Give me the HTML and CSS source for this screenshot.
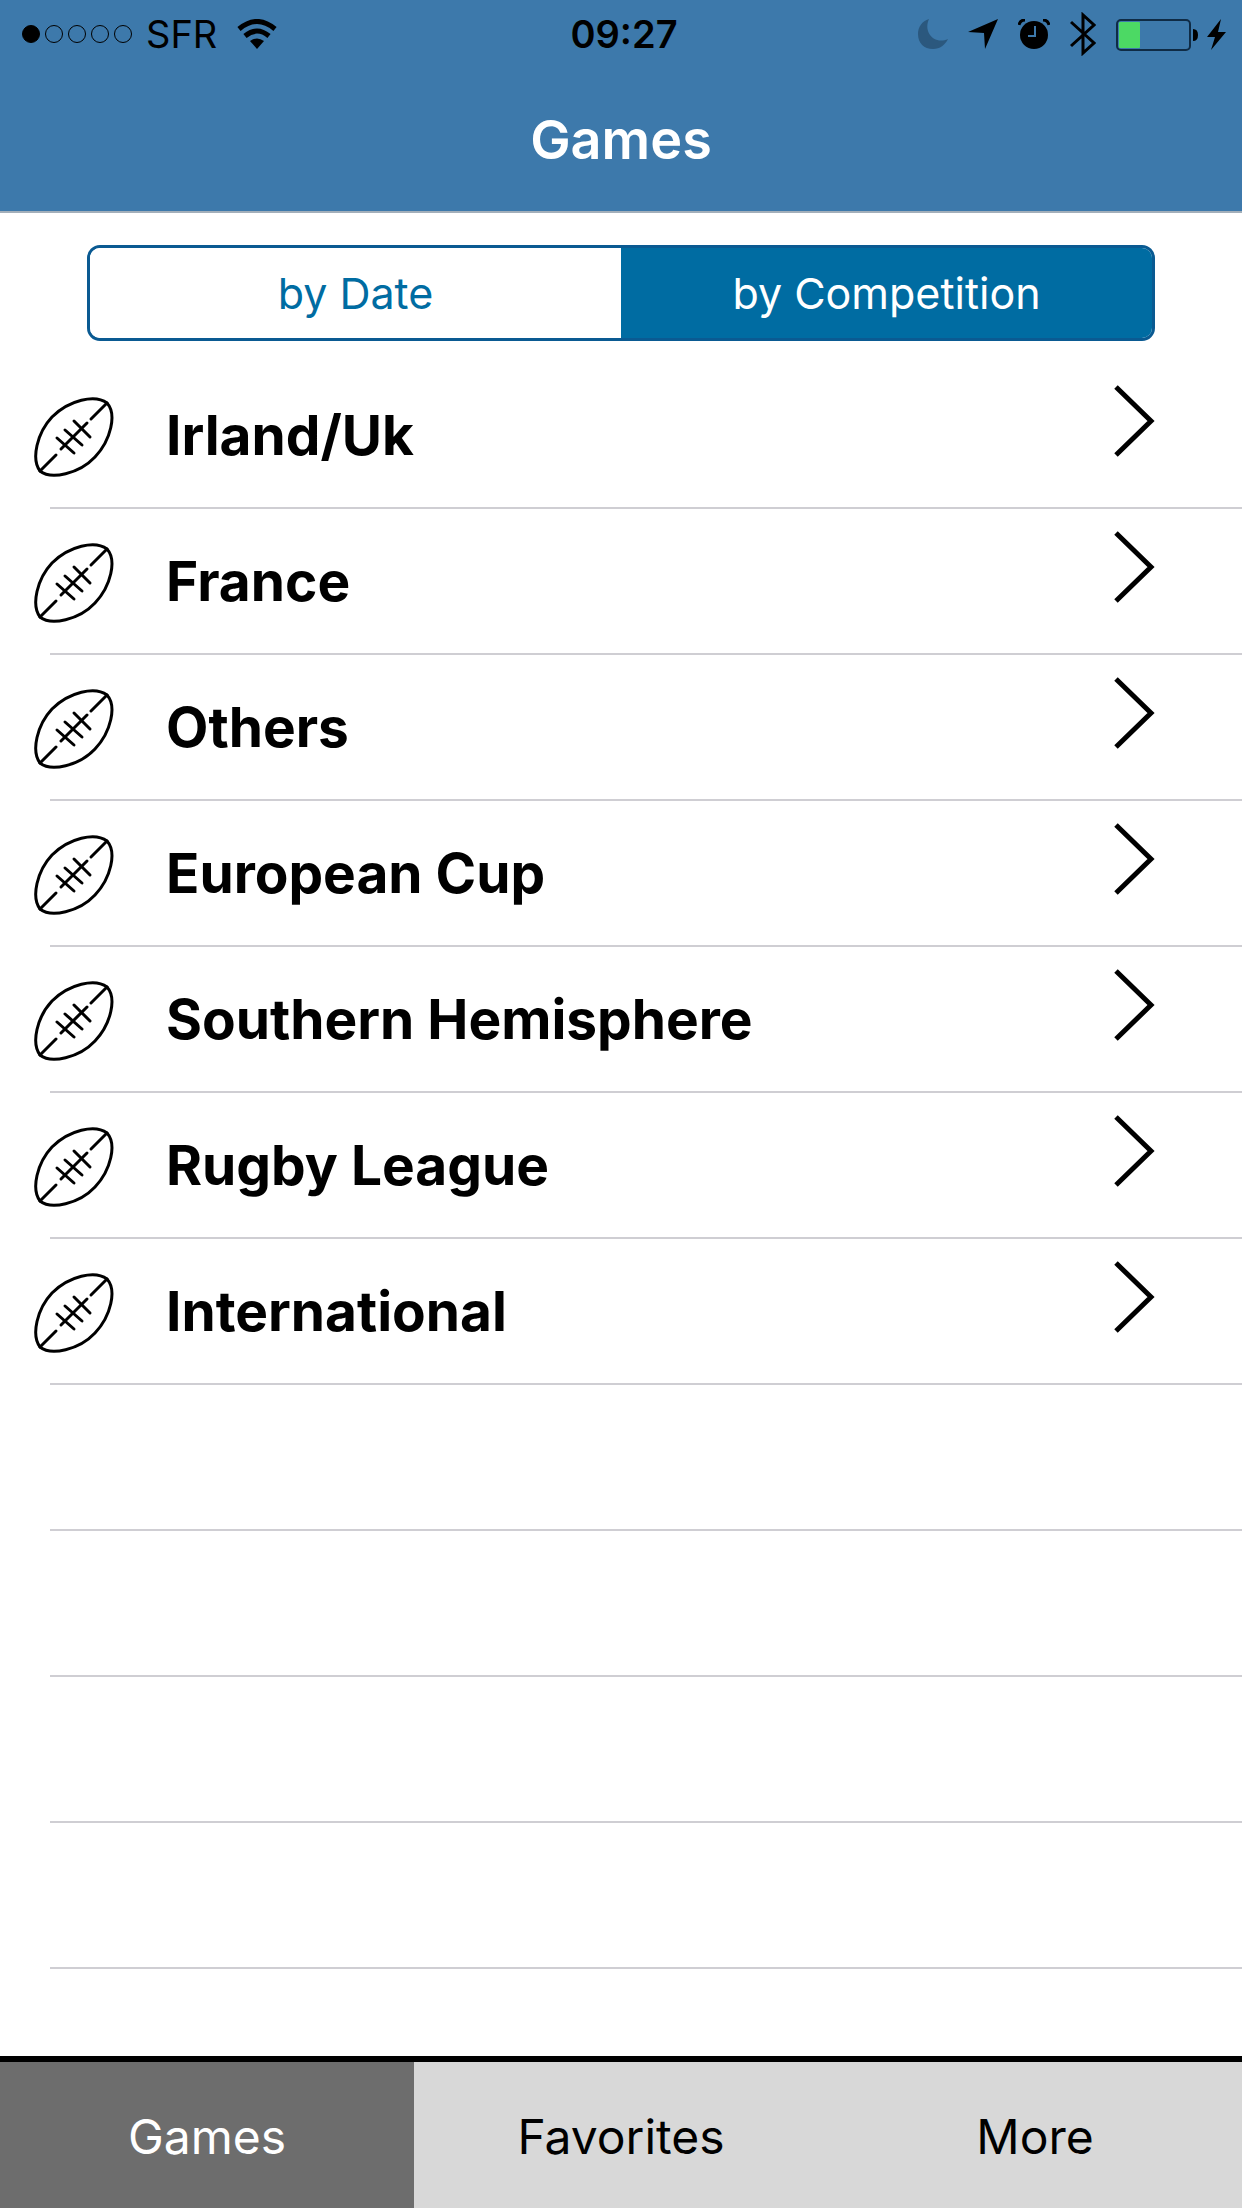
FILE: index.html
```html
<!DOCTYPE html>
<html lang="en">
<head>
    <meta charset="UTF-8">
    <meta name="viewport" content="width=device-width, initial-scale=1.0">
    <title>Games</title>
    <link rel="stylesheet" href="styles.css">
</head>
<body>

<!-- shared icons -->
<svg class="sprite" aria-hidden="true">
    <symbol id="ball" viewBox="0 0 80 80">
        <g fill="none" stroke="#000" stroke-width="3" stroke-linecap="round">
            <path d="M6 74C-3 62 3 36 18 20C35 3 61-3 73 6C83 17 77 43 61 60C45 77 17 83 6 74Z"/>
            <path d="M6 74L22 58M27 52L53 26M57 22L73 6"/>
            <path d="M23 41L40 56M31 33L48 48M40 24L56 40"/>
        </g>
    </symbol>
    <symbol id="chevron" viewBox="0 0 42 74">
        <path d="M3 3L38 37L3 71" fill="none" stroke="#000" stroke-width="5"/>
    </symbol>
</svg>

<header>
    <div class="status-bar">
        <div class="status-left">
            <span class="signal">
                <i class="dot full"></i>
                <i class="dot"></i>
                <i class="dot"></i>
                <i class="dot"></i>
                <i class="dot"></i>
            </span>
            <span class="carrier">SFR</span>
            <svg width="40" height="30" viewBox="0 0 40 30">
                <path d="M2 10Q20-5 38 10" fill="none" stroke="#000" stroke-width="5"/>
                <path d="M8 17Q20 7 32 17" fill="none" stroke="#000" stroke-width="5"/>
                <path d="M13 22Q20 17 27 22L20 30Z"/>
            </svg>
        </div>
        <time class="clock">09:27</time>
        <div class="status-right">
            <svg width="30" height="30" viewBox="0 0 30 30">
                <path d="M11 0C5 13 16 26 30 20C27 26 22 30 15 30C6 30 0 24 0 15C0 8 4 2 11 0Z" fill="#2b587e"/>
            </svg>
            <svg width="30" height="30" viewBox="0 0 30 30">
                <path d="M30 0L17 30L16 14L0 13Z"/>
            </svg>
            <svg width="32" height="30" viewBox="0 0 32 30">
                <circle cx="16" cy="16" r="14"/>
                <path d="M17 7V17H10" fill="none" stroke="#3d79ab" stroke-width="2"/>
                <path d="M1 6Q2 1 7 1M25 1Q30 1 31 6" fill="none" stroke="#000" stroke-width="3"/>
            </svg>
            <svg width="26" height="44" viewBox="0 0 26 44">
                <path d="M1 10L24 31L13 41V3L24 13L1 34" fill="none" stroke="#000" stroke-width="3"/>
            </svg>
            <svg width="110" height="33" viewBox="0 0 110 33">
                <rect x="1" y="2" width="73" height="30" rx="4" fill="none" stroke="#0f2b45" stroke-width="2"/>
                <rect x="3" y="4" width="21" height="26" rx="1" fill="#4cd964"/>
                <path d="M77 11Q82 11 82 17Q82 23 77 23Z"/>
                <path d="M105 1L91 19H99L95 32L110 14H102Z"/>
            </svg>
        </div>
    </div>
    <h1>Games</h1>
</header>

<main>
    <div class="segmented">
        <button type="button">by Date</button>
        <button type="button" class="selected">by Competition</button>
    </div>

    <ul class="list">
        <li><a href="#"><svg class="ball"><use href="#ball"/></svg><span>Irland/Uk</span><svg class="chevron"><use href="#chevron"/></svg></a></li>
        <li><a href="#"><svg class="ball"><use href="#ball"/></svg><span>France</span><svg class="chevron"><use href="#chevron"/></svg></a></li>
        <li><a href="#"><svg class="ball"><use href="#ball"/></svg><span>Others</span><svg class="chevron"><use href="#chevron"/></svg></a></li>
        <li><a href="#"><svg class="ball"><use href="#ball"/></svg><span>European Cup</span><svg class="chevron"><use href="#chevron"/></svg></a></li>
        <li><a href="#"><svg class="ball"><use href="#ball"/></svg><span>Southern Hemisphere</span><svg class="chevron"><use href="#chevron"/></svg></a></li>
        <li><a href="#"><svg class="ball"><use href="#ball"/></svg><span>Rugby League</span><svg class="chevron"><use href="#chevron"/></svg></a></li>
        <li><a href="#"><svg class="ball"><use href="#ball"/></svg><span>International</span><svg class="chevron"><use href="#chevron"/></svg></a></li>
        <li></li>
        <li></li>
        <li></li>
        <li></li>
    </ul>
</main>

<nav class="tabs">
    <a href="#" class="active">Games</a>
    <a href="#">Favorites</a>
    <a href="#">More</a>
</nav>

</body>
</html>
```
FILE: styles.css
```css
* {
    box-sizing: border-box;
}

body {
    font-family: Inter, "Liberation Sans", sans-serif;
    margin: 0;
    min-height: 100vh;
    display: flex;
    flex-direction: column;
    background-color: #fff;
    color: #000;
}

a {
    color: inherit;
    text-decoration: none;
}

.sprite {
    display: none;
}

header {
    background-color: #3d79ab;
    border-bottom: 2px solid #a3afba;
}

.status-bar {
    display: grid;
    grid-template-columns: 1fr auto 1fr;
    align-items: center;
    height: 68px;
    padding: 0 16px 0 22px;
    font-size: 38px;
}

.status-left,
.status-right {
    display: flex;
    align-items: center;
}

.status-right {
    justify-content: flex-end;
    gap: 20px;
}

.signal {
    display: flex;
    gap: 5px;
    margin-right: 14px;
}

.dot {
    width: 18px;
    height: 18px;
    border: 1px solid #000;
    border-radius: 50%;
}

.dot.full {
    background-color: #000;
}

.carrier {
    margin-right: 20px;
}

.clock {
    font-weight: 600;
}

h1 {
    margin: 0;
    font-size: 54px;
    font-weight: 600;
    line-height: 143px;
    text-align: center;
    color: #fff;
}

main {
    flex: 1;
}

.segmented {
    display: flex;
    height: 96px;
    margin: 32px 87px 22px;
    border: 3px solid #0a5a92;
    border-radius: 13px;
    overflow: hidden;
}

.segmented button {
    flex: 1;
    padding: 0;
    border: none;
    background-color: #fff;
    color: #006ca2;
    font-family: inherit;
    font-size: 43px;
    cursor: pointer;
}

.segmented .selected {
    background-color: #006ca2;
    color: #fff;
}

.list {
    list-style: none;
    margin: 0;
    padding: 0 0 0 50px;
}

.list li {
    height: 146px;
    border-bottom: 2px solid #cfced3;
}

.list a {
    display: flex;
    align-items: center;
    height: 100%;
    margin-left: -16px;
    padding-right: 87px;
    font-size: 55px;
    font-weight: 700;
}

.ball {
    width: 80px;
    height: 80px;
    margin: 4px 52px 0 0;
}

.list span {
    flex: 1;
}

.chevron {
    width: 42px;
    height: 74px;
    margin-bottom: 28px;
}

.tabs {
    display: flex;
    border-top: 6px solid #000;
    background-color: #d8d8d8;
}

.tabs a {
    flex: 1;
    padding-top: 4px;
    font-size: 48px;
    line-height: 142px;
    text-align: center;
}

.tabs .active {
    background-color: #6d6d6d;
    color: #fff;
}
```
